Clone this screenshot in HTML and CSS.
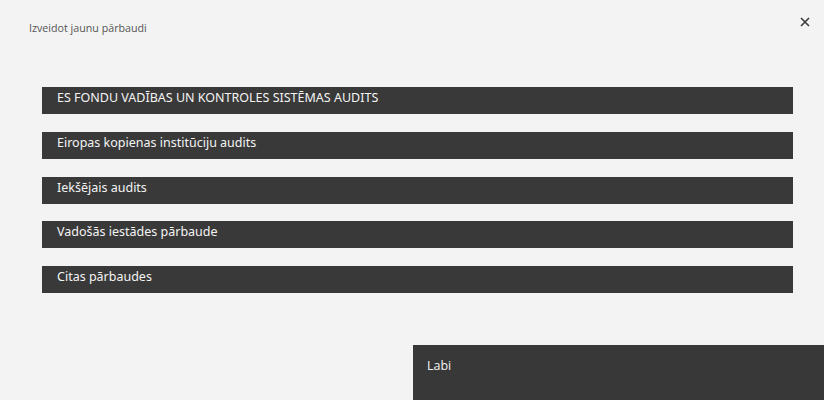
FILE: index.html
```html
<!DOCTYPE html>
<html lang="lv">
<head>
<meta charset="utf-8">
<title>Izveidot jaunu pārbaudi</title>
<link rel="stylesheet" href="styles.css">
</head>
<body>
<div class="modal">
  <header class="modal-header">
    <h1 class="modal-title">Izveidot jaunu pārbaudi</h1>
    <button class="close-btn" aria-label="Aizvērt">
      <svg width="10" height="10" viewBox="0 0 10 10"><path d="M1 1 L9 9 M9 1 L1 9" stroke="#3a3a3a" stroke-width="1.6" fill="none"/></svg>
    </button>
  </header>
  <ul class="options">
    <li class="option">ES FONDU VADĪBAS UN KONTROLES SISTĒMAS AUDITS</li>
    <li class="option">Eiropas kopienas institūciju audits</li>
    <li class="option">Iekšējais audits</li>
    <li class="option">Vadošās iestādes pārbaude</li>
    <li class="option">Citas pārbaudes</li>
  </ul>
  <footer class="modal-footer">
    <span class="spacer"></span>
    <button class="ok-btn">Labi</button>
  </footer>
</div>
</body>
</html>
```

FILE: styles.css
```css
html, body {
  margin: 0;
  padding: 0;
  background: #f3f3f3;
  height: 100%;
}
.modal {
  width: 824px;
  height: 400px;
  display: flex;
  flex-direction: column;
  box-sizing: border-box;
}
.modal-header {
  display: flex;
  justify-content: space-between;
  align-items: flex-start;
  height: 87px;
  box-sizing: border-box;
  padding: 21px 14px 0 29px;
}
.modal-title {
  margin: 0;
  font-family: "Open Sans", "Liberation Sans", sans-serif;
  font-weight: 400;
  font-size: 10.7px;
  line-height: 14px;
  color: #555;
}
.close-btn {
  border: 0;
  background: none;
  padding: 0;
  width: 10px;
  height: 10px;
  margin-top: -4px;
  display: flex;
  cursor: pointer;
}
.options {
  list-style: none;
  margin: 0;
  padding: 0 31px 0 42px;
  display: flex;
  flex-direction: column;
  gap: 17.75px;
}
.option {
  background: #393939;
  color: #f4f4f4;
  height: 27px;
  box-sizing: border-box;
  padding: 3px 15px 0;
  font-family: "Noto Sans", "Liberation Sans", sans-serif;
  font-size: 12.5px;
  line-height: 16px;
}
.modal-footer {
  margin-top: auto;
  display: flex;
  height: 55px;
}
.spacer {
  flex: 1;
}
.ok-btn {
  width: 411px;
  height: 55px;
  border: 0;
  background: #383838;
  color: #f4f4f4;
  text-align: left;
  padding: 13px 14px 0;
  display: flex;
  align-items: flex-start;
  font-family: "Open Sans", "Liberation Sans", sans-serif;
  font-size: 12.5px;
  line-height: 16px;
  cursor: pointer;
}
```
